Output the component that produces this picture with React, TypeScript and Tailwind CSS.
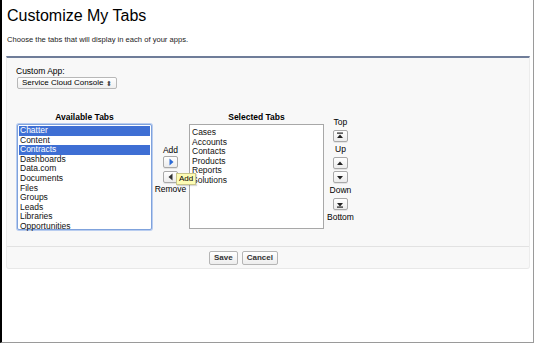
import React from 'react'

const available = [
  'Chatter',
  'Content',
  'Contracts',
  'Dashboards',
  'Data.com',
  'Documents',
  'Files',
  'Groups',
  'Leads',
  'Libraries',
  'Opportunities',
]
const highlighted = ['Chatter', 'Contracts']
const selected = ['Cases', 'Accounts', 'Contacts', 'Products', 'Reports', 'Solutions']

const SmallButton: React.FC<{ children: React.ReactNode }> = ({ children }) => (
  <div className="w-[15px] h-[12px] flex items-center justify-center border border-[#a9a9a9] rounded-[2px] bg-gradient-to-b from-white to-[#ececec] shadow-[0_1px_0_rgba(0,0,0,0.08)]">
    {children}
  </div>
)

const Tri: React.FC<{ dir: 'up' | 'down' | 'left' | 'right'; color?: string; bar?: 'top' | 'bottom' }> = ({
  dir,
  color = '#222',
  bar,
}) => {
  const pts = {
    up: '1,6 4,2.5 7,6',
    down: '1,3 4,6.5 7,3',
    left: '5.5,0.5 5.5,7.5 1.5,4',
    right: '2.5,0.5 2.5,7.5 6.5,4',
  }[dir]
  return (
    <svg width="8" height="8" viewBox="0 0 8 8">
      <polygon points={pts} fill={color} />
      {bar === 'top' && <rect x="1" y="0.5" width="6" height="1.2" fill={color} />}
      {bar === 'bottom' && <rect x="1" y="6.5" width="6" height="1.2" fill={color} />}
    </svg>
  )
}

export default function App() {
  return (
    <div className="w-[534px] h-[343px] bg-white border-l-2 border-l-black border-r border-r-[#9a9a9a] border-b border-b-[#9a9a9a] font-['Liberation_Sans',Arial,sans-serif] text-black overflow-hidden">
      <h1 className="text-[16px] leading-[20px] pl-[5px] pt-[6px]">Customize My Tabs</h1>
      <p className="text-[7.6px] leading-[10px] pl-[5px] mt-[9px] text-[#222]">
        Choose the tabs that will display in each of your apps.
      </p>
      <div className="ml-[4px] w-[524px] mt-[11px] border-t-2 border-t-[#6f7d99] bg-[#f8f8f8] border-x border-x-[#ececec] border-b border-b-[#e8e8e8] rounded-b-[3px]">
        <div className="pl-[9px] pt-[8px]">
          <div className="text-[8.5px] leading-[10px]">Custom App:</div>
          <div className="mt-[1px] ml-[1px] w-[100px] h-[12px] flex items-center justify-between px-[4px] border border-[#b8b8b8] rounded-[2px] bg-gradient-to-b from-white to-[#efefef] text-[8px]">
            <span>Service Cloud Console</span>
            <span className="text-[7px] leading-none text-[#444]">⬍</span>
          </div>
        </div>

        <div className="flex items-start pl-[10px] mt-[23px] relative">
          <div className="w-[135px] flex flex-col">
            <div className="text-[8.5px] leading-[10px] font-bold text-center">Available Tabs</div>
            <div className="mt-[2px] h-[106px] bg-white border border-[#7fa2dc] rounded-[2px] shadow-[0_0_0_1px_#b9cdf0] pt-[1px] px-[1px] text-[8.5px] leading-[9.6px]">
              {available.map((t) => (
                <div
                  key={t}
                  className={
                    highlighted.includes(t)
                      ? 'bg-[#3e6fd4] text-white pl-[1px]'
                      : 'pl-[1px] text-[#111]'
                  }
                >
                  {t}
                </div>
              ))}
            </div>
          </div>

          <div className="w-[37px] flex flex-col items-center mt-[34px] text-[8.5px] leading-[9px]">
            <div>Add</div>
            <div className="mt-[1px]">
              <SmallButton>
                <Tri dir="right" color="#2b6ad6" />
              </SmallButton>
            </div>
            <div className="mt-[3px]">
              <SmallButton>
                <Tri dir="left" color="#333" />
              </SmallButton>
            </div>
            <div className="mt-[2px]">Remove</div>
          </div>

          <div className="w-[135px] flex flex-col">
            <div className="text-[8.5px] leading-[10px] font-bold text-center">Selected Tabs</div>
            <div className="mt-[2px] h-[105px] bg-white border border-[#a8a8a8] pt-[3px] pl-[2px] text-[8.5px] leading-[9.6px] text-[#111]">
              {selected.map((t) => (
                <div key={t}>{t}</div>
              ))}
            </div>
          </div>

          <div className="ml-[3px] flex flex-col items-center mt-[6px] text-[8.5px] leading-[9px]">
            <div>Top</div>
            <div className="mt-[3px]">
              <SmallButton>
                <Tri dir="up" bar="top" />
              </SmallButton>
            </div>
            <div className="mt-[3px]">Up</div>
            <div className="mt-[3px]">
              <SmallButton>
                <Tri dir="up" />
              </SmallButton>
            </div>
            <div className="mt-[2px]">
              <SmallButton>
                <Tri dir="down" />
              </SmallButton>
            </div>
            <div className="mt-[3px]">Down</div>
            <div className="mt-[3px]">
              <SmallButton>
                <Tri dir="down" bar="bottom" />
              </SmallButton>
            </div>
            <div className="mt-[3px]">Bottom</div>
          </div>

          <div className="absolute left-[169px] top-[61px] px-[2px] h-[12px] flex items-center bg-[#fdfcb4] border border-[#c9c58a] text-[8px] shadow-[1px_1px_1px_rgba(0,0,0,0.15)]">
            Add
          </div>
        </div>

        <div className="mt-[16px] border-t border-t-[#e2e2e2] h-[22px] flex items-center gap-[4px] pl-[202px]">
          <button className="h-[14px] px-[4px] text-[8px] font-bold text-[#333] border border-[#b5b5b5] rounded-[2px] bg-gradient-to-b from-white to-[#ededed]">
            Save
          </button>
          <button className="h-[14px] px-[4px] text-[8px] font-bold text-[#333] border border-[#b5b5b5] rounded-[2px] bg-gradient-to-b from-white to-[#ededed]">
            Cancel
          </button>
        </div>
      </div>
    </div>
  )
}
